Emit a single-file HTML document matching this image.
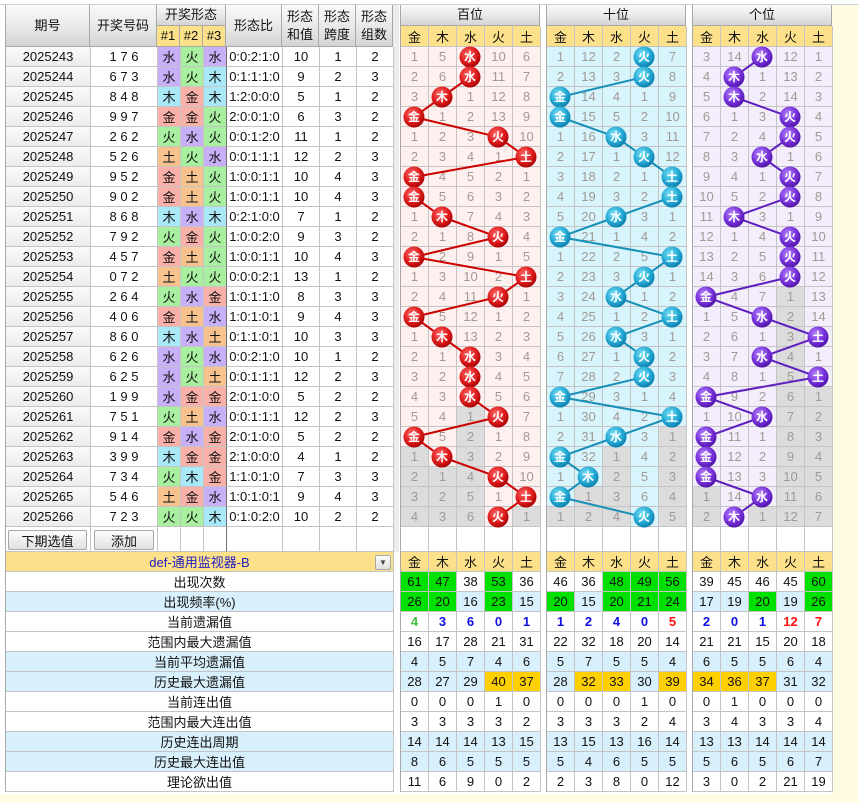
<!DOCTYPE html>
<html><head><meta charset="utf-8">
<style>
*{margin:0;padding:0}
body{width:858px;height:803px;background:#fff;position:relative;overflow:hidden;font-family:"Liberation Sans","Noto Sans CJK SC",sans-serif;font-size:13px;color:#111}
.a{position:absolute;box-sizing:border-box}
.hd{background:linear-gradient(#fafafa,#e6e6e6 60%,#d4d4d4);border-right:1px solid #a8a8a8;border-bottom:1px solid #a8a8a8;display:flex;align-items:center;justify-content:center;text-align:center;line-height:18px}
.grid{position:absolute;display:grid;grid-auto-rows:20px}
.grid b{font-weight:normal;box-sizing:border-box;border-right:1px solid #c4c4c4;border-bottom:1px solid #c4c4c4;display:flex;align-items:center;justify-content:center;white-space:pre}
.L{grid-template-columns:85px 67px 23px 23px 23px 56px 37px 37px 37px}
.L b.q{background:linear-gradient(#fafafa,#ececec)}
.L b.s{border-right:1px solid #707070}
.sh{background:#c8b0f8}.hu{background:#a8f0a0}.mu{background:#a8e8f8}.jn{background:#f8b0a8}.tu{background:#f8c28e}
.P{grid-template-columns:repeat(5,28px);border-left:1px solid #a8a8a8;color:#a09a94;font-size:13px}
.P b.g{background:#dcdcdc}
.S{grid-template-columns:repeat(5,28px);border-left:1px solid #a8a8a8}
.S b.G{background:#00e000}.S b.Y{background:#ffd000}
.yl{background:#fde18a}
.btn{background:linear-gradient(#fdfdfd,#e0e0e0);border:1px solid #a8a8a8;border-radius:2px;display:flex;align-items:center;justify-content:center}
</style></head><body>
<div class="a" style="left:0;top:4px;width:858px;height:1px;background:#c8d0d8"></div>
<div class="a" style="left:832px;top:5px;width:26px;height:798px;background:#fffbe0"></div>
<div class="a" style="left:0;top:794px;width:858px;height:9px;background:#fffbe0"></div>
<div class="a" style="left:393px;top:5px;width:6px;height:547px;background:#ececec"></div>

<div class="a hd" style="left:5px;top:5px;width:85px;height:42px;border-left:1px solid #a8a8a8">期号</div>
<div class="a hd" style="left:90px;top:5px;width:67px;height:42px">开奖号码</div>
<div class="a hd" style="left:157px;top:5px;width:69px;height:21px">开奖形态</div>
<div class="a hd yl" style="left:157px;top:26px;width:23px;height:21px;background:#fde18a">#1</div>
<div class="a hd yl" style="left:180px;top:26px;width:23px;height:21px;background:#fde18a">#2</div>
<div class="a hd yl" style="left:203px;top:26px;width:23px;height:21px;background:#fde18a">#3</div>
<div class="a hd" style="left:226px;top:5px;width:56px;height:42px">形态比</div>
<div class="a hd" style="left:282px;top:5px;width:37px;height:42px">形态<br>和值</div>
<div class="a hd" style="left:319px;top:5px;width:37px;height:42px">形态<br>跨度</div>
<div class="a hd" style="left:356px;top:5px;width:37px;height:42px">形态<br>组数</div>

<div class="grid L" style="left:5px;top:47px;border-left:1px solid #a8a8a8">
<b class=q>2025243</b><b>1 7 6</b><b class=sh>水</b><b class=hu>火</b><b class="sh s">水</b><b>0:0:2:1:0</b><b>10</b><b>1</b><b>2</b>
<b class=q>2025244</b><b>6 7 3</b><b class=sh>水</b><b class=hu>火</b><b class="mu s">木</b><b>0:1:1:1:0</b><b>9</b><b>2</b><b>3</b>
<b class=q>2025245</b><b>8 4 8</b><b class=mu>木</b><b class=jn>金</b><b class="mu s">木</b><b>1:2:0:0:0</b><b>5</b><b>1</b><b>2</b>
<b class=q>2025246</b><b>9 9 7</b><b class=jn>金</b><b class=jn>金</b><b class="hu s">火</b><b>2:0:0:1:0</b><b>6</b><b>3</b><b>2</b>
<b class=q>2025247</b><b>2 6 2</b><b class=hu>火</b><b class=sh>水</b><b class="hu s">火</b><b>0:0:1:2:0</b><b>11</b><b>1</b><b>2</b>
<b class=q>2025248</b><b>5 2 6</b><b class=tu>土</b><b class=hu>火</b><b class="sh s">水</b><b>0:0:1:1:1</b><b>12</b><b>2</b><b>3</b>
<b class=q>2025249</b><b>9 5 2</b><b class=jn>金</b><b class=tu>土</b><b class="hu s">火</b><b>1:0:0:1:1</b><b>10</b><b>4</b><b>3</b>
<b class=q>2025250</b><b>9 0 2</b><b class=jn>金</b><b class=tu>土</b><b class="hu s">火</b><b>1:0:0:1:1</b><b>10</b><b>4</b><b>3</b>
<b class=q>2025251</b><b>8 6 8</b><b class=mu>木</b><b class=sh>水</b><b class="mu s">木</b><b>0:2:1:0:0</b><b>7</b><b>1</b><b>2</b>
<b class=q>2025252</b><b>7 9 2</b><b class=hu>火</b><b class=jn>金</b><b class="hu s">火</b><b>1:0:0:2:0</b><b>9</b><b>3</b><b>2</b>
<b class=q>2025253</b><b>4 5 7</b><b class=jn>金</b><b class=tu>土</b><b class="hu s">火</b><b>1:0:0:1:1</b><b>10</b><b>4</b><b>3</b>
<b class=q>2025254</b><b>0 7 2</b><b class=tu>土</b><b class=hu>火</b><b class="hu s">火</b><b>0:0:0:2:1</b><b>13</b><b>1</b><b>2</b>
<b class=q>2025255</b><b>2 6 4</b><b class=hu>火</b><b class=sh>水</b><b class="jn s">金</b><b>1:0:1:1:0</b><b>8</b><b>3</b><b>3</b>
<b class=q>2025256</b><b>4 0 6</b><b class=jn>金</b><b class=tu>土</b><b class="sh s">水</b><b>1:0:1:0:1</b><b>9</b><b>4</b><b>3</b>
<b class=q>2025257</b><b>8 6 0</b><b class=mu>木</b><b class=sh>水</b><b class="tu s">土</b><b>0:1:1:0:1</b><b>10</b><b>3</b><b>3</b>
<b class=q>2025258</b><b>6 2 6</b><b class=sh>水</b><b class=hu>火</b><b class="sh s">水</b><b>0:0:2:1:0</b><b>10</b><b>1</b><b>2</b>
<b class=q>2025259</b><b>6 2 5</b><b class=sh>水</b><b class=hu>火</b><b class="tu s">土</b><b>0:0:1:1:1</b><b>12</b><b>2</b><b>3</b>
<b class=q>2025260</b><b>1 9 9</b><b class=sh>水</b><b class=jn>金</b><b class="jn s">金</b><b>2:0:1:0:0</b><b>5</b><b>2</b><b>2</b>
<b class=q>2025261</b><b>7 5 1</b><b class=hu>火</b><b class=tu>土</b><b class="sh s">水</b><b>0:0:1:1:1</b><b>12</b><b>2</b><b>3</b>
<b class=q>2025262</b><b>9 1 4</b><b class=jn>金</b><b class=sh>水</b><b class="jn s">金</b><b>2:0:1:0:0</b><b>5</b><b>2</b><b>2</b>
<b class=q>2025263</b><b>3 9 9</b><b class=mu>木</b><b class=jn>金</b><b class="jn s">金</b><b>2:1:0:0:0</b><b>4</b><b>1</b><b>2</b>
<b class=q>2025264</b><b>7 3 4</b><b class=hu>火</b><b class=mu>木</b><b class="jn s">金</b><b>1:1:0:1:0</b><b>7</b><b>3</b><b>3</b>
<b class=q>2025265</b><b>5 4 6</b><b class=tu>土</b><b class=jn>金</b><b class="sh s">水</b><b>1:0:1:0:1</b><b>9</b><b>4</b><b>3</b>
<b class=q>2025266</b><b>7 2 3</b><b class=hu>火</b><b class=hu>火</b><b class="mu s">木</b><b>0:1:0:2:0</b><b>10</b><b>2</b><b>2</b>
</div>
<div class="grid L" style="left:5px;top:527px;grid-auto-rows:25px;border-left:1px solid #a8a8a8">
<b></b><b></b><b></b><b></b><b class=s></b><b></b><b></b><b></b><b></b>
</div>
<div class="a btn" style="left:8px;top:530px;width:79px;height:20px">下期选值</div>
<div class="a btn" style="left:94px;top:530px;width:60px;height:20px">添加</div>

<div class="a hd" style="left:400px;top:5px;width:140px;height:21px;border-left:1px solid #a8a8a8">百位</div>
<div class="a hd" style="left:546px;top:5px;width:140px;height:21px;border-left:1px solid #a8a8a8">十位</div>
<div class="a hd" style="left:692px;top:5px;width:140px;height:21px;border-left:1px solid #a8a8a8">个位</div>
<div class="grid S yl" style="left:400px;top:26px;grid-auto-rows:21px"><b>金</b><b>木</b><b>水</b><b>火</b><b>土</b></div>
<div class="grid S yl" style="left:546px;top:26px;grid-auto-rows:21px"><b>金</b><b>木</b><b>水</b><b>火</b><b>土</b></div>
<div class="grid S yl" style="left:692px;top:26px;grid-auto-rows:21px"><b>金</b><b>木</b><b>水</b><b>火</b><b>土</b></div>

<div class="grid P" style="left:400px;top:47px;background:#fff0f0">
<b>1</b><b>5</b><b></b><b>10</b><b>6</b>
<b>2</b><b>6</b><b></b><b>11</b><b>7</b>
<b>3</b><b></b><b>1</b><b>12</b><b>8</b>
<b></b><b>1</b><b>2</b><b>13</b><b>9</b>
<b>1</b><b>2</b><b>3</b><b></b><b>10</b>
<b>2</b><b>3</b><b>4</b><b>1</b><b></b>
<b></b><b>4</b><b>5</b><b>2</b><b>1</b>
<b></b><b>5</b><b>6</b><b>3</b><b>2</b>
<b>1</b><b></b><b>7</b><b>4</b><b>3</b>
<b>2</b><b>1</b><b>8</b><b></b><b>4</b>
<b></b><b>2</b><b>9</b><b>1</b><b>5</b>
<b>1</b><b>3</b><b>10</b><b>2</b><b></b>
<b>2</b><b>4</b><b>11</b><b></b><b>1</b>
<b></b><b>5</b><b>12</b><b>1</b><b>2</b>
<b>1</b><b></b><b>13</b><b>2</b><b>3</b>
<b>2</b><b>1</b><b></b><b>3</b><b>4</b>
<b>3</b><b>2</b><b></b><b>4</b><b>5</b>
<b>4</b><b>3</b><b></b><b>5</b><b>6</b>
<b>5</b><b>4</b><b class=g>1</b><b></b><b>7</b>
<b></b><b>5</b><b class=g>2</b><b>1</b><b>8</b>
<b class=g>1</b><b></b><b class=g>3</b><b>2</b><b>9</b>
<b class=g>2</b><b class=g>1</b><b class=g>4</b><b></b><b>10</b>
<b class=g>3</b><b class=g>2</b><b class=g>5</b><b>1</b><b></b>
<b class=g>4</b><b class=g>3</b><b class=g>6</b><b></b><b class=g>1</b>
</div>
<div class="grid P" style="left:546px;top:47px;background:#d8f4fc">
<b>1</b><b>12</b><b>2</b><b></b><b>7</b>
<b>2</b><b>13</b><b>3</b><b></b><b>8</b>
<b></b><b>14</b><b>4</b><b>1</b><b>9</b>
<b></b><b>15</b><b>5</b><b>2</b><b>10</b>
<b>1</b><b>16</b><b></b><b>3</b><b>11</b>
<b>2</b><b>17</b><b>1</b><b></b><b>12</b>
<b>3</b><b>18</b><b>2</b><b>1</b><b></b>
<b>4</b><b>19</b><b>3</b><b>2</b><b></b>
<b>5</b><b>20</b><b></b><b>3</b><b>1</b>
<b></b><b>21</b><b>1</b><b>4</b><b>2</b>
<b>1</b><b>22</b><b>2</b><b>5</b><b></b>
<b>2</b><b>23</b><b>3</b><b></b><b>1</b>
<b>3</b><b>24</b><b></b><b>1</b><b>2</b>
<b>4</b><b>25</b><b>1</b><b>2</b><b></b>
<b>5</b><b>26</b><b></b><b>3</b><b>1</b>
<b>6</b><b>27</b><b>1</b><b></b><b>2</b>
<b>7</b><b>28</b><b>2</b><b></b><b>3</b>
<b></b><b>29</b><b>3</b><b>1</b><b>4</b>
<b>1</b><b>30</b><b>4</b><b>2</b><b></b>
<b>2</b><b>31</b><b></b><b>3</b><b class=g>1</b>
<b></b><b>32</b><b class=g>1</b><b>4</b><b class=g>2</b>
<b>1</b><b></b><b class=g>2</b><b>5</b><b class=g>3</b>
<b></b><b class=g>1</b><b class=g>3</b><b>6</b><b class=g>4</b>
<b class=g>1</b><b class=g>2</b><b class=g>4</b><b></b><b class=g>5</b>
</div>
<div class="grid P" style="left:692px;top:47px;background:#f4eefc">
<b>3</b><b>14</b><b></b><b>12</b><b>1</b>
<b>4</b><b></b><b>1</b><b>13</b><b>2</b>
<b>5</b><b></b><b>2</b><b>14</b><b>3</b>
<b>6</b><b>1</b><b>3</b><b></b><b>4</b>
<b>7</b><b>2</b><b>4</b><b></b><b>5</b>
<b>8</b><b>3</b><b></b><b>1</b><b>6</b>
<b>9</b><b>4</b><b>1</b><b></b><b>7</b>
<b>10</b><b>5</b><b>2</b><b></b><b>8</b>
<b>11</b><b></b><b>3</b><b>1</b><b>9</b>
<b>12</b><b>1</b><b>4</b><b></b><b>10</b>
<b>13</b><b>2</b><b>5</b><b></b><b>11</b>
<b>14</b><b>3</b><b>6</b><b></b><b>12</b>
<b></b><b>4</b><b>7</b><b class=g>1</b><b>13</b>
<b>1</b><b>5</b><b></b><b class=g>2</b><b>14</b>
<b>2</b><b>6</b><b>1</b><b class=g>3</b><b></b>
<b>3</b><b>7</b><b></b><b class=g>4</b><b>1</b>
<b>4</b><b>8</b><b>1</b><b class=g>5</b><b></b>
<b></b><b>9</b><b>2</b><b class=g>6</b><b class=g>1</b>
<b>1</b><b>10</b><b></b><b class=g>7</b><b class=g>2</b>
<b></b><b>11</b><b>1</b><b class=g>8</b><b class=g>3</b>
<b></b><b>12</b><b>2</b><b class=g>9</b><b class=g>4</b>
<b></b><b>13</b><b>3</b><b class=g>10</b><b class=g>5</b>
<b class=g>1</b><b>14</b><b></b><b class=g>11</b><b class=g>6</b>
<b class=g>2</b><b></b><b class=g>1</b><b class=g>12</b><b class=g>7</b>
</div>
<div class="grid S" style="left:400px;top:527px;grid-auto-rows:25px"><b></b><b></b><b></b><b></b><b></b></div>
<div class="grid S" style="left:546px;top:527px;grid-auto-rows:25px"><b></b><b></b><b></b><b></b><b></b></div>
<div class="grid S" style="left:692px;top:527px;grid-auto-rows:25px"><b></b><b></b><b></b><b></b><b></b></div>

<svg class="a" style="left:0;top:0" width="858" height="803">
<defs>
<radialGradient id="r" cx="0.4" cy="0.35" r="0.7"><stop offset="0" stop-color="#ff6a6a"/><stop offset="0.6" stop-color="#dd1a1a"/><stop offset="1" stop-color="#a00000"/></radialGradient>
<radialGradient id="c" cx="0.4" cy="0.35" r="0.7"><stop offset="0" stop-color="#7ee0f8"/><stop offset="0.6" stop-color="#22a8d4"/><stop offset="1" stop-color="#0a78a8"/></radialGradient>
<radialGradient id="p" cx="0.4" cy="0.35" r="0.7"><stop offset="0" stop-color="#b888ff"/><stop offset="0.6" stop-color="#7530d8"/><stop offset="1" stop-color="#4a10a0"/></radialGradient>
</defs>
<polyline fill="none" stroke="#cc0000" stroke-width="2" points="470,57 470,77 442,97 414,117 498,137 526,157 414,177 414,197 442,217 498,237 414,257 526,277 498,297 414,317 442,337 470,357 470,377 470,397 498,417 414,437 442,457 498,477 526,497 498,517"/>
<polyline fill="none" stroke="#1890b8" stroke-width="2" points="644,57 644,77 560,97 560,117 616,137 644,157 672,177 672,197 616,217 560,237 672,257 644,277 616,297 672,317 616,337 644,357 644,377 560,397 672,417 616,437 560,457 588,477 560,497 644,517"/>
<polyline fill="none" stroke="#6020c0" stroke-width="2" points="762,57 734,77 734,97 790,117 790,137 762,157 790,177 790,197 734,217 790,237 790,257 790,277 706,297 762,317 818,337 762,357 818,377 706,397 762,417 706,437 706,457 706,477 762,497 734,517"/>
<g fill="url(#r)">
<circle cx="470" cy="57" r="10.5"/><circle cx="470" cy="77" r="10.5"/><circle cx="442" cy="97" r="10.5"/><circle cx="414" cy="117" r="10.5"/><circle cx="498" cy="137" r="10.5"/><circle cx="526" cy="157" r="10.5"/><circle cx="414" cy="177" r="10.5"/><circle cx="414" cy="197" r="10.5"/><circle cx="442" cy="217" r="10.5"/><circle cx="498" cy="237" r="10.5"/><circle cx="414" cy="257" r="10.5"/><circle cx="526" cy="277" r="10.5"/><circle cx="498" cy="297" r="10.5"/><circle cx="414" cy="317" r="10.5"/><circle cx="442" cy="337" r="10.5"/><circle cx="470" cy="357" r="10.5"/><circle cx="470" cy="377" r="10.5"/><circle cx="470" cy="397" r="10.5"/><circle cx="498" cy="417" r="10.5"/><circle cx="414" cy="437" r="10.5"/><circle cx="442" cy="457" r="10.5"/><circle cx="498" cy="477" r="10.5"/><circle cx="526" cy="497" r="10.5"/><circle cx="498" cy="517" r="10.5"/>
</g>
<g fill="url(#c)">
<circle cx="644" cy="57" r="10.5"/><circle cx="644" cy="77" r="10.5"/><circle cx="560" cy="97" r="10.5"/><circle cx="560" cy="117" r="10.5"/><circle cx="616" cy="137" r="10.5"/><circle cx="644" cy="157" r="10.5"/><circle cx="672" cy="177" r="10.5"/><circle cx="672" cy="197" r="10.5"/><circle cx="616" cy="217" r="10.5"/><circle cx="560" cy="237" r="10.5"/><circle cx="672" cy="257" r="10.5"/><circle cx="644" cy="277" r="10.5"/><circle cx="616" cy="297" r="10.5"/><circle cx="672" cy="317" r="10.5"/><circle cx="616" cy="337" r="10.5"/><circle cx="644" cy="357" r="10.5"/><circle cx="644" cy="377" r="10.5"/><circle cx="560" cy="397" r="10.5"/><circle cx="672" cy="417" r="10.5"/><circle cx="616" cy="437" r="10.5"/><circle cx="560" cy="457" r="10.5"/><circle cx="588" cy="477" r="10.5"/><circle cx="560" cy="497" r="10.5"/><circle cx="644" cy="517" r="10.5"/>
</g>
<g fill="url(#p)">
<circle cx="762" cy="57" r="10.5"/><circle cx="734" cy="77" r="10.5"/><circle cx="734" cy="97" r="10.5"/><circle cx="790" cy="117" r="10.5"/><circle cx="790" cy="137" r="10.5"/><circle cx="762" cy="157" r="10.5"/><circle cx="790" cy="177" r="10.5"/><circle cx="790" cy="197" r="10.5"/><circle cx="734" cy="217" r="10.5"/><circle cx="790" cy="237" r="10.5"/><circle cx="790" cy="257" r="10.5"/><circle cx="790" cy="277" r="10.5"/><circle cx="706" cy="297" r="10.5"/><circle cx="762" cy="317" r="10.5"/><circle cx="818" cy="337" r="10.5"/><circle cx="762" cy="357" r="10.5"/><circle cx="818" cy="377" r="10.5"/><circle cx="706" cy="397" r="10.5"/><circle cx="762" cy="417" r="10.5"/><circle cx="706" cy="437" r="10.5"/><circle cx="706" cy="457" r="10.5"/><circle cx="706" cy="477" r="10.5"/><circle cx="762" cy="497" r="10.5"/><circle cx="734" cy="517" r="10.5"/>
</g>
<g fill="#fff" font-size="12" font-weight="bold" text-anchor="middle" font-family="Liberation Sans,Noto Sans CJK SC,sans-serif">
<text x="470" y="61">水</text><text x="470" y="81">水</text><text x="442" y="101">木</text><text x="414" y="121">金</text><text x="498" y="141">火</text><text x="526" y="161">土</text><text x="414" y="181">金</text><text x="414" y="201">金</text><text x="442" y="221">木</text><text x="498" y="241">火</text><text x="414" y="261">金</text><text x="526" y="281">土</text><text x="498" y="301">火</text><text x="414" y="321">金</text><text x="442" y="341">木</text><text x="470" y="361">水</text><text x="470" y="381">水</text><text x="470" y="401">水</text><text x="498" y="421">火</text><text x="414" y="441">金</text><text x="442" y="461">木</text><text x="498" y="481">火</text><text x="526" y="501">土</text><text x="498" y="521">火</text>
<text x="644" y="61">火</text><text x="644" y="81">火</text><text x="560" y="101">金</text><text x="560" y="121">金</text><text x="616" y="141">水</text><text x="644" y="161">火</text><text x="672" y="181">土</text><text x="672" y="201">土</text><text x="616" y="221">水</text><text x="560" y="241">金</text><text x="672" y="261">土</text><text x="644" y="281">火</text><text x="616" y="301">水</text><text x="672" y="321">土</text><text x="616" y="341">水</text><text x="644" y="361">火</text><text x="644" y="381">火</text><text x="560" y="401">金</text><text x="672" y="421">土</text><text x="616" y="441">水</text><text x="560" y="461">金</text><text x="588" y="481">木</text><text x="560" y="501">金</text><text x="644" y="521">火</text>
<text x="762" y="61">水</text><text x="734" y="81">木</text><text x="734" y="101">木</text><text x="790" y="121">火</text><text x="790" y="141">火</text><text x="762" y="161">水</text><text x="790" y="181">火</text><text x="790" y="201">火</text><text x="734" y="221">木</text><text x="790" y="241">火</text><text x="790" y="261">火</text><text x="790" y="281">火</text><text x="706" y="301">金</text><text x="762" y="321">水</text><text x="818" y="341">土</text><text x="762" y="361">水</text><text x="818" y="381">土</text><text x="706" y="401">金</text><text x="762" y="421">水</text><text x="706" y="441">金</text><text x="706" y="461">金</text><text x="706" y="481">金</text><text x="762" y="501">水</text><text x="734" y="521">木</text>
</g>
</svg>

<div class="a yl" style="left:5px;top:552px;width:827px;height:20px"></div>
<div class="a" style="left:5px;top:592px;width:827px;height:20px;background:#d8f0fc"></div>
<div class="a" style="left:5px;top:652px;width:827px;height:40px;background:#d8f0fc"></div>
<div class="a" style="left:5px;top:732px;width:827px;height:40px;background:#d8f0fc"></div>
<div class="a" style="left:393px;top:552px;width:7px;height:242px;background:#fff"></div>
<div class="a" style="left:540px;top:552px;width:6px;height:242px;background:#fff"></div>
<div class="a" style="left:686px;top:552px;width:6px;height:242px;background:#fff"></div>

<div class="grid" style="left:5px;top:552px;grid-template-columns:388px;border-left:1px solid #a8a8a8">
<b style="color:#2020c0">def-通用监视器-B</b>
<b>出现次数</b><b>出现频率(%)</b><b>当前遗漏值</b><b>范围内最大遗漏值</b><b>当前平均遗漏值</b><b>历史最大遗漏值</b><b>当前连出值</b><b>范围内最大连出值</b><b>历史连出周期</b><b>历史最大连出值</b><b>理论欲出值</b>
</div>
<div class="a btn" style="left:375px;top:555px;width:16px;height:15px;font-size:8px;color:#444">▼</div>

<div class="grid S" style="left:400px;top:552px">
<b>金</b><b>木</b><b>水</b><b>火</b><b>土</b>
<b class=G>61</b><b class=G>47</b><b>38</b><b class=G>53</b><b>36</b>
<b class=G>26</b><b class=G>20</b><b>16</b><b class=G>23</b><b>15</b>
<b style="color:#40c040;font-weight:bold">4</b><b style="color:#1010e0;font-weight:bold">3</b><b style="color:#1010e0;font-weight:bold">6</b><b style="color:#1010e0;font-weight:bold">0</b><b style="color:#1010e0;font-weight:bold">1</b>
<b>16</b><b>17</b><b>28</b><b>21</b><b>31</b>
<b>4</b><b>5</b><b>7</b><b>4</b><b>6</b>
<b>28</b><b>27</b><b>29</b><b class=Y>40</b><b class=Y>37</b>
<b>0</b><b>0</b><b>0</b><b>1</b><b>0</b>
<b>3</b><b>3</b><b>3</b><b>3</b><b>2</b>
<b>14</b><b>14</b><b>14</b><b>13</b><b>15</b>
<b>8</b><b>6</b><b>5</b><b>5</b><b>5</b>
<b>11</b><b>6</b><b>9</b><b>0</b><b>2</b>
</div>
<div class="grid S" style="left:546px;top:552px">
<b>金</b><b>木</b><b>水</b><b>火</b><b>土</b>
<b>46</b><b>36</b><b class=G>48</b><b class=G>49</b><b class=G>56</b>
<b class=G>20</b><b>15</b><b class=G>20</b><b class=G>21</b><b class=G>24</b>
<b style="color:#1010e0;font-weight:bold">1</b><b style="color:#1010e0;font-weight:bold">2</b><b style="color:#1010e0;font-weight:bold">4</b><b style="color:#1010e0;font-weight:bold">0</b><b style="color:#ff1010;font-weight:bold">5</b>
<b>22</b><b>32</b><b>18</b><b>20</b><b>14</b>
<b>5</b><b>7</b><b>5</b><b>5</b><b>4</b>
<b>28</b><b class=Y>32</b><b class=Y>33</b><b>30</b><b class=Y>39</b>
<b>0</b><b>0</b><b>0</b><b>1</b><b>0</b>
<b>3</b><b>3</b><b>3</b><b>2</b><b>4</b>
<b>13</b><b>15</b><b>13</b><b>16</b><b>14</b>
<b>5</b><b>4</b><b>6</b><b>5</b><b>5</b>
<b>2</b><b>3</b><b>8</b><b>0</b><b>12</b>
</div>
<div class="grid S" style="left:692px;top:552px">
<b>金</b><b>木</b><b>水</b><b>火</b><b>土</b>
<b>39</b><b>45</b><b>46</b><b>45</b><b class=G>60</b>
<b>17</b><b>19</b><b class=G>20</b><b>19</b><b class=G>26</b>
<b style="color:#1010e0;font-weight:bold">2</b><b style="color:#1010e0;font-weight:bold">0</b><b style="color:#1010e0;font-weight:bold">1</b><b style="color:#ff1010;font-weight:bold">12</b><b style="color:#ff1010;font-weight:bold">7</b>
<b>21</b><b>21</b><b>15</b><b>20</b><b>18</b>
<b>6</b><b>5</b><b>5</b><b>6</b><b>4</b>
<b class=Y>34</b><b class=Y>36</b><b class=Y>37</b><b>31</b><b>32</b>
<b>0</b><b>1</b><b>0</b><b>0</b><b>0</b>
<b>3</b><b>4</b><b>3</b><b>3</b><b>4</b>
<b>13</b><b>13</b><b>14</b><b>14</b><b>14</b>
<b>5</b><b>6</b><b>5</b><b>6</b><b>7</b>
<b>3</b><b>0</b><b>2</b><b>21</b><b>19</b>
</div>
</body></html>
